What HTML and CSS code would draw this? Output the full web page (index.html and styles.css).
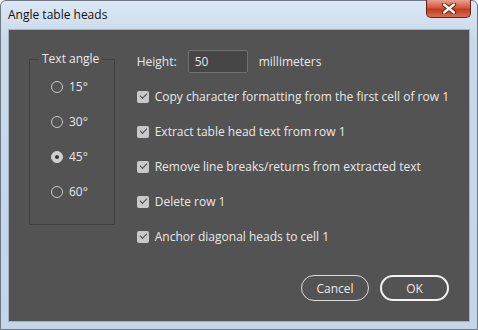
FILE: index.html
```html
<!DOCTYPE html>
<html lang="en">
<head>
<meta charset="UTF-8">
<meta name="viewport" content="width=device-width, initial-scale=1.0">
<title>Angle table heads</title>
<link rel="stylesheet" href="styles.css">
</head>
<body>
<div class="window">
    <div class="titlebar">
        <span class="title">Angle table heads</span>
        <span class="close-btn">
            <svg width="16" height="11" viewBox="0 0 16 11">
                <path d="M3 1.5 L13 9.5 M13 1.5 L3 9.5" stroke="#5c1c12" stroke-width="4.2" stroke-linecap="round"/>
                <path d="M3 1.5 L13 9.5 M13 1.5 L3 9.5" stroke="#fff" stroke-width="2.4" stroke-linecap="round"/>
            </svg>
        </span>
    </div>
    <div class="content">
        <div class="main">
            <fieldset class="group">
                <legend>Text angle</legend>
                <div class="radio-row"><span class="radio"></span>15°</div>
                <div class="radio-row"><span class="radio"></span>30°</div>
                <div class="radio-row"><span class="radio checked"></span>45°</div>
                <div class="radio-row"><span class="radio"></span>60°</div>
            </fieldset>
            <div class="options">
                <div class="row">
                    <span class="label">Height:</span>
                    <span class="text-input">50</span>
                    <span>millimeters</span>
                </div>
                <div class="row"><span class="check"></span>Copy character formatting from the first cell of row 1</div>
                <div class="row"><span class="check"></span>Extract table head text from row 1</div>
                <div class="row"><span class="check"></span>Remove line breaks/returns from extracted text</div>
                <div class="row"><span class="check"></span>Delete row 1</div>
                <div class="row"><span class="check"></span>Anchor diagonal heads to cell 1</div>
            </div>
        </div>
        <div class="buttons">
            <span class="btn">Cancel</span>
            <span class="btn btn-default">OK</span>
        </div>
    </div>
</div>
</body>
</html>
```

FILE: styles.css
```css
body {
    margin: 0;
    background-color: #fff;
    font-family: "Open Sans", "Noto Sans", sans-serif;
}
.window {
    width: 478px;
    height: 330px;
    box-sizing: border-box;
    border: 1px solid #6d7884;
    border-radius: 6px 6px 0 0;
    background: linear-gradient(to bottom, #dbe7f4 0, #c9d9ea 40px, #c4d5e8 100%);
    padding: 0 7px 7px 7px;
    display: flex;
    flex-direction: column;
}
.titlebar {
    height: 28px;
    display: flex;
    align-items: flex-start;
    justify-content: space-between;
    flex-shrink: 0;
}
.title {
    font-size: 12px;
    color: #111;
    margin-top: 5px;
}
.close-btn {
    width: 45px;
    height: 18px;
    margin-top: -1px;
    margin-right: -1px;
    box-sizing: border-box;
    border: 1px solid #5f2218;
    border-top: none;
    border-radius: 0 0 5px 5px;
    background: linear-gradient(to bottom, #e8a190 0, #d4583f 45%, #c13a22 55%, #d96f4f 100%);
    display: flex;
    align-items: center;
    justify-content: center;
}
.content {
    flex: 1;
    background-color: #535353;
    border: 1px solid #9fb2c8;
    box-sizing: border-box;
    padding: 14px 20px 20px 20px;
    display: flex;
    flex-direction: column;
    color: #e8e8e8;
    font-size: 12px;
}
.main {
    display: flex;
    gap: 22px;
}
.group {
    margin: 8px 0 0 0;
    padding: 3px 0 14px 0;
    width: 87px;
    height: 173px;
    box-sizing: border-box;
    border: 1px solid #414141;
    min-inline-size: 0;
}
.group legend {
    margin-left: 9px;
    padding: 0 3px;
    line-height: 14px;
    font-size: 12px;
    white-space: nowrap;
}
.radio-row {
    height: 35px;
    padding-left: 21px;
    display: flex;
    align-items: center;
    gap: 6px;
}
.radio {
    width: 12px;
    height: 12px;
    box-sizing: border-box;
    border: 1px solid #c8c8c8;
    border-radius: 50%;
}
.radio.checked {
    background-color: #cfcfcf;
    border-color: #cfcfcf;
    position: relative;
}
.radio.checked::after {
    content: "";
    position: absolute;
    left: 3px;
    top: 3px;
    width: 4px;
    height: 4px;
    border-radius: 50%;
    background-color: #333;
}
.options {
    display: flex;
    flex-direction: column;
}
.row {
    height: 35px;
    display: flex;
    align-items: center;
    white-space: nowrap;
}
.label {
    width: 51px;
}
.text-input {
    width: 60px;
    height: 23px;
    box-sizing: border-box;
    border: 1px solid #717171;
    border-radius: 2px;
    background-color: #464646;
    padding-left: 6px;
    margin-right: 11px;
    display: flex;
    align-items: center;
}
.check {
    width: 12px;
    height: 12px;
    margin-right: 6px;
    border-radius: 2px;
    background-color: #c9c9c9;
    position: relative;
    flex-shrink: 0;
}
.check::after {
    content: "";
    position: absolute;
    left: 3px;
    top: 2px;
    width: 6px;
    height: 3px;
    border-left: 1.5px solid #4a4a4a;
    border-bottom: 1.5px solid #4a4a4a;
    transform: rotate(-45deg);
}
.buttons {
    margin-top: auto;
    display: flex;
    justify-content: flex-end;
    gap: 11px;
}
.btn {
    width: 68px;
    height: 26px;
    box-sizing: border-box;
    border: 1px solid #dcdcdc;
    border-radius: 13px;
    display: flex;
    align-items: center;
    justify-content: center;
    font-size: 12px;
}
.btn-default {
    width: 69px;
    border: 2px solid #f2f2f2;
}
```
